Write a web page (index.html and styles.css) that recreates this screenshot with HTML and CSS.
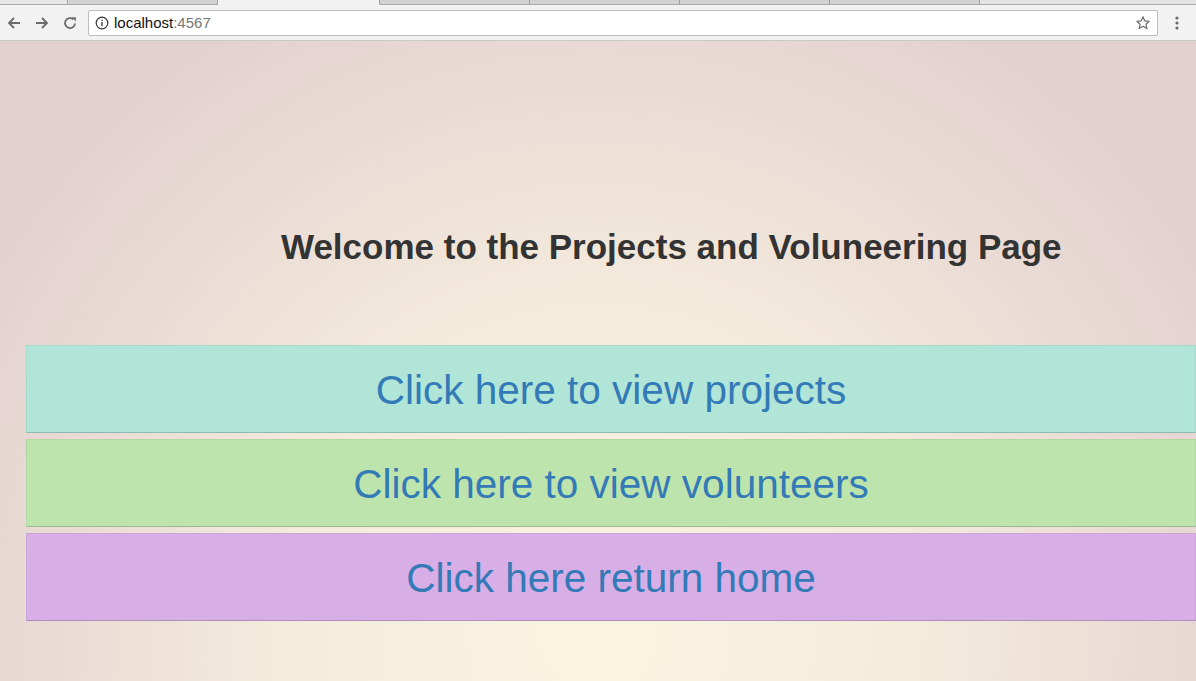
FILE: index.html
```html
<!DOCTYPE html>
<html>
<head>
<meta charset="utf-8">
<title>Projects</title>
<link rel="stylesheet" href="styles.css">
</head>
<body>
<div class="chrome">
  <div class="tabstrip">
    <div class="tab t0"></div>
    <div class="tab t1"></div>
    <div class="tab active"></div>
    <div class="tab"></div>
    <div class="tab"></div>
    <div class="tab"></div>
    <div class="tab"></div>
    <div class="tab rest"></div>
  </div>
  <div class="toolbar">
    <div class="navs">
      <svg class="nav" width="16" height="16" viewBox="0 0 16 16"><path d="M14 8H3M8 3L3 8l5 5" fill="none" stroke="#6b6b6b" stroke-width="1.8"/></svg>
      <svg class="nav" width="16" height="16" viewBox="0 0 16 16"><path d="M2 8h11M8 3l5 5-5 5" fill="none" stroke="#6b6b6b" stroke-width="1.8"/></svg>
      <svg class="nav" width="16" height="16" viewBox="0 0 16 16"><path d="M13 8.5A5 5 0 1 1 11.3 4.3" fill="none" stroke="#6b6b6b" stroke-width="1.8"/><path d="M9.5 2.2h4.3v4.3z" fill="#6b6b6b"/></svg>
    </div>
    <div class="omnibox">
      <svg class="info" width="14" height="14" viewBox="0 0 14 14"><circle cx="7" cy="7" r="5.8" fill="none" stroke="#333" stroke-width="1.2"/><rect x="6.35" y="6" width="1.3" height="4.2" fill="#333"/><rect x="6.35" y="3.6" width="1.3" height="1.3" fill="#333"/></svg>
      <span class="host">localhost</span><span class="port">:4567</span>
      <svg class="star" width="16" height="16" viewBox="0 0 16 16"><path d="M8 1.8l1.8 4.1 4.4.4-3.3 2.9 1 4.4L8 11.3l-3.9 2.3 1-4.4-3.3-2.9 4.4-.4z" fill="none" stroke="#6b6b6b" stroke-width="1.2" stroke-linejoin="round"/></svg>
    </div>
    <svg class="menu" width="4" height="16" viewBox="0 0 4 16"><circle cx="2" cy="3" r="1.6" fill="#6b6b6b"/><circle cx="2" cy="8" r="1.6" fill="#6b6b6b"/><circle cx="2" cy="13" r="1.6" fill="#6b6b6b"/></svg>
  </div>
</div>
<div class="page">
  <h1 class="title">Welcome to the Projects and Voluneering Page</h1>
  <div class="links">
    <a class="btn teal" href="#">Click here to view projects</a>
    <a class="btn green" href="#">Click here to view volunteers</a>
    <a class="btn purple" href="#">Click here return home</a>
  </div>
</div>
</body>
</html>
```
FILE: styles.css
```css
html, body {
  margin: 0;
  padding: 0;
  height: 100%;
  overflow: hidden;
}
body {
  font-family: "Liberation Sans", Arial, sans-serif;
  display: flex;
  flex-direction: column;
}
.chrome {
  background: #f2f2f2;
  border-bottom: 1px solid #c9c9c9;
  flex: 0 0 auto;
}
.tabstrip {
  height: 4px;
  display: flex;
  border-bottom: 1px solid #a9a9a9;
  background: #d4d4d4;
}
.tab {
  width: 150px;
  height: 4px;
  background: #d3d3d3;
  border-right: 1px solid #9e9e9e;
  box-sizing: border-box;
}
.tab.t0 { width: 68px; background: #e6e6e6; border-right: 1px solid #aaa; }
.tab.t1 { width: 150px; }
.tab.active { width: 162px; background: #f2f2f2; border-right: 1px solid #9e9e9e; border-bottom: 1px solid #f2f2f2; height: 5px; }
.tab.rest { flex: 1; border-right: none; background: #e3e3e3; }
.toolbar {
  height: 35px;
  display: flex;
  align-items: center;
  padding: 0 0 0 6px;
}
.navs {
  display: flex;
  gap: 12px;
  width: 82px;
  align-items: center;
}
.omnibox {
  width: 1068px;
  height: 24px;
  background: #fff;
  border: 1px solid #bdbdbd;
  border-radius: 2px;
  display: flex;
  align-items: center;
  font-size: 15px;
  box-sizing: content-box;
}
.info { margin-left: 6px; margin-right: 5px; }
.host { color: #111; }
.port { color: #777; }
.star { margin-left: auto; margin-right: 6px; }
.menu { margin-left: 17px; }
.page {
  flex: 1;
  background: radial-gradient(circle 700px at 50% 92%, #faf4e0 0%, #f4ebdc 45%, #e3d1d0 100%);
  padding-left: 26px;
}
.title {
  margin: 0;
  padding: 186px 0 0 255px;
  font-size: 35px;
  line-height: 40px;
  font-weight: bold;
  color: #333;
}
.links {
  margin-top: 78px;
  display: flex;
  flex-direction: column;
  gap: 6px;
  width: 1170px;
}
.btn {
  display: flex;
  align-items: center;
  justify-content: center;
  font-size: 40.5px;
  color: #337ab7;
  text-decoration: none;
  border: 1px solid rgba(0, 0, 0, 0.05);
  border-bottom-color: rgba(0, 0, 0, 0.18);
  padding-top: 2px;
  box-sizing: content-box;
  height: 84px;
}
.teal { background: #b0e5d8; }
.green { background: #bee4ae; }
.purple { background: #d7aee6; }
```
